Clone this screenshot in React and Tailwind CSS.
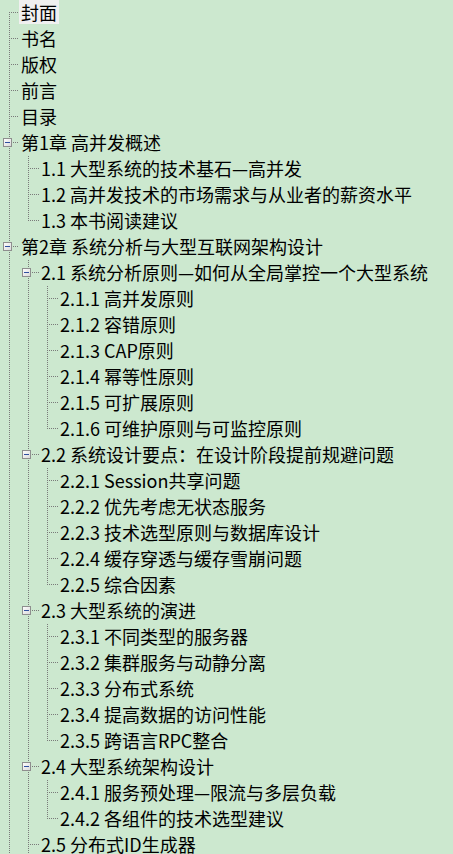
const toc = [
  { t: "封面", selected: true },
  { t: "书名" },
  { t: "版权" },
  { t: "前言" },
  { t: "目录" },
  {
    t: "第1章 高并发概述",
    c: [
      { t: "1.1 大型系统的技术基石—高并发" },
      { t: "1.2 高并发技术的市场需求与从业者的薪资水平" },
      { t: "1.3 本书阅读建议" },
    ],
  },
  {
    t: "第2章 系统分析与大型互联网架构设计",
    more: true,
    c: [
      {
        t: "2.1 系统分析原则—如何从全局掌控一个大型系统",
        c: [
          { t: "2.1.1 高并发原则" },
          { t: "2.1.2 容错原则" },
          { t: "2.1.3 CAP原则" },
          { t: "2.1.4 幂等性原则" },
          { t: "2.1.5 可扩展原则" },
          { t: "2.1.6 可维护原则与可监控原则" },
        ],
      },
      {
        t: "2.2 系统设计要点：在设计阶段提前规避问题",
        c: [
          { t: "2.2.1 Session共享问题" },
          { t: "2.2.2 优先考虑无状态服务" },
          { t: "2.2.3 技术选型原则与数据库设计" },
          { t: "2.2.4 缓存穿透与缓存雪崩问题" },
          { t: "2.2.5 综合因素" },
        ],
      },
      {
        t: "2.3 大型系统的演进",
        c: [
          { t: "2.3.1 不同类型的服务器" },
          { t: "2.3.2 集群服务与动静分离" },
          { t: "2.3.3 分布式系统" },
          { t: "2.3.4 提高数据的访问性能" },
          { t: "2.3.5 跨语言RPC整合" },
        ],
      },
      {
        t: "2.4 大型系统架构设计",
        c: [
          { t: "2.4.1 服务预处理—限流与多层负载" },
          { t: "2.4.2 各组件的技术选型建议" },
        ],
      },
      { t: "2.5 分布式ID生成器", more: true },
    ],
  },
];

// flatten tree into rows, keeping track of which ancestor lines continue
function flatten(nodes, level, trail, out) {
  nodes.forEach((n, i) => {
    const last = i === nodes.length - 1 && !n.more;
    out.push({
      ...n,
      level,
      trail,
      last,
      first: level === 0 && i === 0,
    });
    if (n.c) flatten(n.c, level + 1, [...trail, !last], out);
  });
  return out;
}

const rows = flatten(toc, 0, [], []);

const LINE_X = [9.5, 28.5, 47.5];
const WIDTHS = [19, 39, 58];
const DOT = "#7a7a7a";

function Connector({ row }) {
  const w = WIDTHS[row.level];
  const x = LINE_X[row.level];
  const y = 12.5;
  return (
    <svg width={w} height="26" className="shrink-0" shapeRendering="crispEdges">
      {row.trail.map((cont, i) =>
        cont ? (
          <line key={i} x1={LINE_X[i]} y1="0" x2={LINE_X[i]} y2="26" stroke={DOT} strokeDasharray="1 1" />
        ) : null
      )}
      {!row.first && <line x1={x} y1="0" x2={x} y2={y} stroke={DOT} strokeDasharray="1 1" />}
      {!row.last && <line x1={x} y1="12" x2={x} y2="26" stroke={DOT} strokeDasharray="1 1" />}
      <line x1={x - 0.5} y1={y} x2={w} y2={y} stroke={DOT} strokeDasharray="1 1" />
      {row.c && (
        <g>
          <rect x={x - 6} y="8.5" width="8" height="8" fill="url(#boxfill)" stroke="#8e8e8e" />
          <line x1={x - 4.5} y1={y} x2={x + 0.5} y2={y} stroke="#2f4f9f" />
        </g>
      )}
    </svg>
  );
}

export default function App() {
  return (
    <div className="w-[453px] h-[854px] overflow-hidden bg-[#cce8cf] text-black font-['Noto_Sans_CJK_SC','Noto_Sans',sans-serif]">
      <svg width="0" height="0" className="absolute">
        <defs>
          <linearGradient id="boxfill" x1="0" y1="0" x2="1" y2="1">
            <stop offset="0" stopColor="#ffffff" />
            <stop offset="1" stopColor="#d8d8d8" />
          </linearGradient>
        </defs>
      </svg>
      {rows.map((row, i) => (
        <div key={i} className="flex h-[26px] items-start whitespace-nowrap">
          <Connector row={row} />
          <span
            className={`px-[2px] h-[24px] leading-[24px] text-[18px] ${
              row.selected ? "bg-[#f0f0f0]" : ""
            }`}
          >
            {row.t}
          </span>
        </div>
      ))}
    </div>
  );
}
